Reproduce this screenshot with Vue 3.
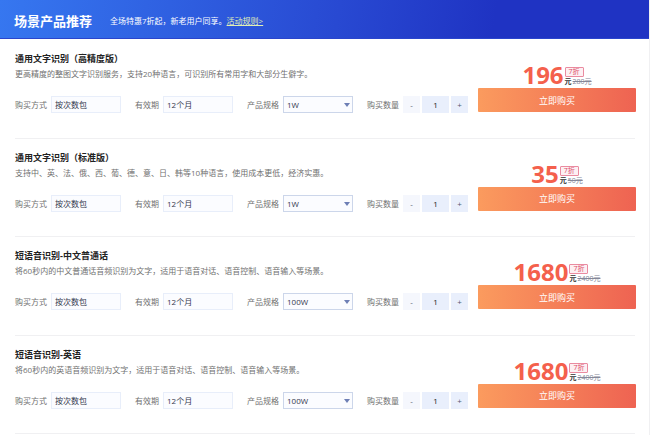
<script setup>
import { ref } from "vue";

const products = ref([
  {
    id: 1,
    name: "通用文字识别（高精度版）",
    desc: "更高精度的整图文字识别服务，支持20种语言，可识别所有常用字和大部分生僻字。",
    spec: "1W",
    count: 1,
    price: 196,
    oldPrice: 280,
  },
  {
    id: 2,
    name: "通用文字识别（标准版）",
    desc: "支持中、英、法、俄、西、葡、德、意、日、韩等10种语言，使用成本更低，经济实惠。",
    spec: "1W",
    count: 1,
    price: 35,
    oldPrice: 50,
  },
  {
    id: 3,
    name: "短语音识别-中文普通话",
    desc: "将60秒内的中文普通话音频识别为文字，适用于语音对话、语音控制、语音输入等场景。",
    spec: "100W",
    count: 1,
    price: 1680,
    oldPrice: 2400,
  },
  {
    id: 4,
    name: "短语音识别-英语",
    desc: "将60秒内的英语音频识别为文字，适用于语音对话、语音控制、语音输入等场景。",
    spec: "100W",
    count: 1,
    price: 1680,
    oldPrice: 2400,
  },
]);

const specs = ["1W", "100W"];

const decrease = (product) => {
  if (product.count > 1) {
    product.count--;
  }
};

const increase = (product) => {
  product.count++;
};
</script>

<template>
  <main>
    <header>
      <h1 class="header-title">场景产品推荐</h1>
      <p class="header-text">
        全场特惠7折起，新老用户同享。<a href="#" class="header-link">活动规则&gt;</a>
      </p>
    </header>
    <div class="list">
      <section v-for="product in products" class="product" :key="product.id">
        <div class="info">
          <h2 class="product-name">{{ product.name }}</h2>
          <p class="product-desc">{{ product.desc }}</p>
          <div class="fields">
            <div class="field">
              <label :for="'mode-' + product.id">购买方式</label>
              <input :id="'mode-' + product.id" class="field-input" type="text" value="按次数包" readonly />
            </div>
            <div class="field">
              <label :for="'period-' + product.id">有效期</label>
              <input :id="'period-' + product.id" class="field-input" type="text" value="12个月" readonly />
            </div>
            <div class="field">
              <label :for="'spec-' + product.id">产品规格</label>
              <div class="select-wrap">
                <select :id="'spec-' + product.id" v-model="product.spec" class="field-select">
                  <option v-for="spec in specs" :key="spec" :value="spec">{{ spec }}</option>
                </select>
              </div>
            </div>
            <div class="field">
              <label :for="'count-' + product.id">购买数量</label>
              <div class="stepper">
                <button class="step-btn step-minus" @click="decrease(product)">-</button>
                <input :id="'count-' + product.id" v-model.number="product.count" class="step-input" type="text" />
                <button class="step-btn" @click="increase(product)">+</button>
              </div>
            </div>
          </div>
        </div>
        <div class="buy">
          <div class="price">
            <span class="price-value">{{ product.price }}</span>
            <div class="price-side">
              <span class="discount">7折</span>
              <span class="price-unit"><b>元</b><del>{{ product.oldPrice }}元</del></span>
            </div>
          </div>
          <button class="buy-btn">立即购买</button>
        </div>
      </section>
    </div>
  </main>
</template>

<style>
body {
  margin: 0;
  background-color: #fff;
}
</style>

<style scoped>
main {
  display: flex;
  flex-direction: column;
  min-height: 100vh;
  box-sizing: border-box;
  border-right: 1px solid #f0f0f2;
  font-family: "Open Sans", "Noto Sans CJK SC", sans-serif;
  font-size: 8px;
  color: #707070;
}

h1,
h2,
p {
  margin: 0;
}

input,
select,
button {
  box-sizing: border-box;
  margin: 0;
  border: none;
  border-radius: 0;
  font-family: inherit;
  font-size: 8px;
}

header {
  display: flex;
  align-items: center;
  gap: 18px;
  height: 39px;
  padding: 4px 14px 0;
  box-sizing: border-box;
  border-bottom: 1px solid #2a45cc;
  background: linear-gradient(100deg, #3677f0 0%, #2849d2 52%, #1f33c3 76%);
  color: #fff;
}

.header-title {
  font-size: 13px;
  line-height: 18px;
  font-weight: bold;
}

.header-text {
  line-height: 16px;
}

.header-link {
  color: #e2f0b4;
}

.list {
  flex: 1;
  display: flex;
  flex-direction: column;
  padding: 1px 14px 1px 15px;
}

.product {
  flex: 1;
  display: flex;
  gap: 10px;
  border-bottom: 1px solid #f0f0f2;
}

.info {
  flex: 1;
  padding: 12px 0 24px;
}

.product-name {
  font-size: 9px;
  line-height: 14px;
  font-weight: bold;
  color: #222;
}

.product-desc {
  line-height: 16px;
}

.fields {
  display: flex;
  gap: 14px;
  margin-top: 14px;
}

.field {
  display: flex;
  align-items: center;
  gap: 4px;
  height: 17px;
  white-space: nowrap;
}

.field-input,
.field-select {
  width: 70px;
  height: 17px;
  padding: 0 3px;
  border: 1px solid #e8eefa;
  background-color: #fbfcff;
  color: #33384d;
}

.select-wrap {
  position: relative;
  display: flex;
}

.select-wrap::after {
  content: "";
  position: absolute;
  top: 7px;
  right: 3px;
  border: 3px solid transparent;
  border-top: 4px solid #6e7fb5;
  border-bottom: none;
  pointer-events: none;
}

.field-select {
  appearance: none;
  border-color: #ccd6ea;
}

.stepper {
  display: flex;
  gap: 2px;
}

.step-btn,
.step-input {
  width: 17px;
  height: 17px;
  padding: 0;
  background-color: #e9effc;
  color: #555b70;
  text-align: center;
}

.step-minus {
  background-color: #f5f7fd;
}

.step-input {
  width: 27px;
  color: #222;
}

.buy {
  flex: 0 0 158px;
  padding-top: 22px;
}

.price {
  display: flex;
  justify-content: center;
  gap: 1px;
  height: 26px;
}

.price-value {
  font-size: 24px;
  line-height: 25px;
  font-weight: bold;
  color: #f4604c;
}

.price-side {
  display: flex;
  flex-direction: column;
  align-items: flex-start;
  padding-top: 5px;
  font-size: 7px;
}

.discount {
  padding: 0 3px;
  border: 1px solid #ea8ba0;
  border-radius: 1px;
  background-color: #fdf0f3;
  line-height: 8px;
  color: #dc4a68;
}

.price-unit {
  display: flex;
  gap: 1px;
  line-height: 9px;
}

.price-unit b {
  color: #333;
}

.price-unit del {
  color: #858899;
}

.buy-btn {
  display: block;
  width: 100%;
  height: 24px;
  padding: 0;
  border-radius: 1px;
  background: linear-gradient(90deg, #fb9b5e, #ee6352);
  font-size: 9px;
  color: #fff;
  cursor: pointer;
}
</style>
